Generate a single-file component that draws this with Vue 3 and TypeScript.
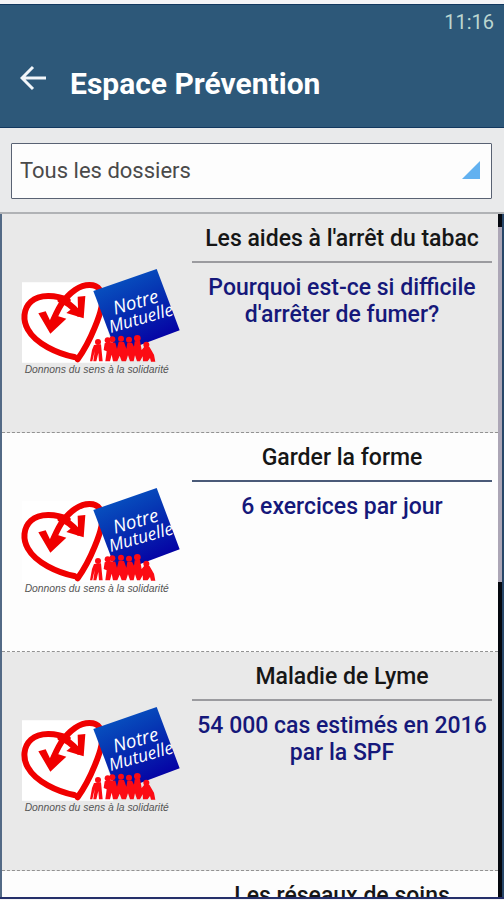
<script setup lang="ts">
import { ref } from 'vue'

interface Dossier {
  id: number
  category: string
  headline?: string
  logo: boolean
}

const dossiers: Dossier[] = [
  { id: 1, category: "Les aides à l'arrêt du tabac", headline: "Pourquoi est-ce si difficile d'arrêter de fumer?", logo: true },
  { id: 2, category: 'Garder la forme', headline: '6 exercices par jour', logo: true },
  { id: 3, category: 'Maladie de Lyme', headline: '54 000 cas estimés en 2016 par la SPF', logo: true },
  { id: 4, category: 'Les réseaux de soins', logo: false },
]

const filter = ref('all')
</script>

<template>
  <div class="screen">
    <header class="bar">
      <time class="clock">11:16</time>
      <div class="heading">
        <button class="back" type="button" aria-label="Retour">
          <svg viewBox="0 0 28 26" width="28" height="26">
            <path d="M13 2 L2 13 L13 24 M2 13 H26" />
          </svg>
        </button>
        <h1>Espace Prévention</h1>
      </div>
    </header>

    <div class="filter">
      <select v-model="filter" aria-label="Dossiers">
        <option value="all">Tous les dossiers</option>
      </select>
      <svg class="corner" viewBox="0 0 18 18" width="18" height="18" aria-hidden="true">
        <path d="M18 0 V18 H0 Z" />
      </svg>
    </div>

    <main class="body">
      <ul class="list">
        <li v-for="d in dossiers" :key="d.id" class="row">
          <div class="picture">
            <svg v-if="d.logo" class="logo" viewBox="60 45 480 336" role="img" aria-label="Notre Mutuelle">
              <defs>
                <linearGradient :id="`blue-${d.id}`" x1="0" y1="0" x2="0.5" y2="1">
                  <stop offset="0" stop-color="#0862c8" />
                  <stop offset="0.45" stop-color="#0639b4" />
                  <stop offset="1" stop-color="#0500a4" />
                </linearGradient>
              </defs>
              <path d="M66 97 H282 L340 300 V338 H66 Z" fill="#fff" />
              <g fill="none" stroke="#f00000" stroke-linecap="round" stroke-linejoin="round">
                <path d="M203 151 C168 134 118 132 93 155 C69 177 68 212 84 239 C107 281 173 311 223 321" stroke-width="18" />
                <path d="M153 226 C172 180 189 144 226 119 C254 101 286 100 299 119 C315 151 302 190 284 233 C269 270 253 300 233 328" stroke-width="18" />
                <path d="M182 150 C201 156 219 170 235 190" stroke-width="19" />
              </g>
              <path d="M115 190 L137 184 L151 213 L173 198 L199 206 L151 251 Z" fill="#f00000" />
              <path d="M233 140 L256 138 L251 205 L199 189 L217 175 L234 179 Z" fill="#f00000" />
              <path d="M280 123 L470 57 L539 241 L351 311 Z" :fill="`url(#blue-${d.id})`" />
              <g class="script" fill="#fff">
                <text x="345" y="194" font-size="56" transform="rotate(-16 345 194)">Notre</text>
                <text x="332" y="249" font-size="52" transform="rotate(-16 332 249)">Mutuelle</text>
              </g>
              <g fill="#fc0b13">
                <circle cx="294" cy="276" r="9" />
                <circle cx="323" cy="271" r="9" />
                <circle cx="337" cy="268" r="9" />
                <circle cx="363" cy="266" r="9" />
                <circle cx="387" cy="269" r="9" />
                <circle cx="412" cy="265" r="10" />
                <circle cx="439" cy="284" r="9" />
                <path d="M282 285 L303 283 L308 334 H297 L295 309 L289 334 H280 L284 304 L277 334 H270 L276 300 Z" />
                <path d="M314 280 L328 276 L346 278 L351 296 L356 275 L372 276 L379 296 L382 278 L396 278 L402 290 L404 274 L420 272 L425 300 L434 289 L448 290 L462 314 L466 335 H453 L450 324 L443 334 H429 L428 319 L420 334 H411 L405 316 L401 334 H390 L384 316 L378 334 H365 L359 317 L352 334 H339 L335 314 L330 334 H316 L320 304 L311 300 Z" />
              </g>
              <text class="motto" x="74" y="368" font-size="31">Donnons du sens à la solidarité</text>
            </svg>
          </div>
          <article class="text">
            <h2>{{ d.category }}</h2>
            <p v-if="d.headline">{{ d.headline }}</p>
          </article>
        </li>
      </ul>
      <div class="track" aria-hidden="true"><div class="thumb"></div></div>
    </main>
  </div>
</template>

<style>
body {
  margin: 0;
  background: #f4f4f6;
}
</style>

<style scoped>
.screen {
  display: flex;
  flex-direction: column;
  box-sizing: border-box;
  height: 100vh;
  padding: 4px 0 1px;
  overflow: hidden;
  font-family: Roboto, "Liberation Sans", sans-serif;
}

.bar {
  display: flex;
  flex: none;
  flex-direction: column;
  box-sizing: border-box;
  height: 124px;
  border: solid #12385f;
  border-width: 1px 0;
  background: #2d5879;
  color: #fff;
}

.clock {
  align-self: flex-end;
  margin: 4px 10px 0 0;
  font-size: 20px;
  line-height: 26px;
  color: #bcd6d0;
}

.heading {
  display: flex;
  align-items: center;
  gap: 22px;
  padding: 24px 20px 0;
}

.back {
  display: flex;
  margin: 0 0 12px;
  padding: 0;
  border: 0;
  background: none;
}

.back path {
  fill: none;
  stroke: #f2f6fa;
  stroke-width: 3;
}

h1 {
  margin: 0;
  font-size: 30px;
  font-weight: 700;
  line-height: 50px;
}

.filter {
  display: grid;
  flex: none;
  padding: 15px 12px 13px 11px;
  border-bottom: 2px solid #b0b2b5;
  background: #e9eaeb;
}

.filter select,
.corner {
  grid-area: 1 / 1;
}

.filter select {
  box-sizing: border-box;
  width: 100%;
  height: 56px;
  padding: 0 36px 2px 8px;
  border: 1px solid #596273;
  border-radius: 1px;
  background: #fdfdfd;
  appearance: none;
  font-family: inherit;
  font-size: 22px;
  color: #4a4a4a;
}

.corner {
  align-self: center;
  justify-self: end;
  margin: 0 12px 2px 0;
  pointer-events: none;
}

.corner path {
  fill: #62b1f0;
}

.body {
  display: flex;
  flex: 1;
  min-height: 0;
  border-bottom: 2px solid #25306a;
}

.list {
  flex: 1;
  margin: 0;
  padding: 0;
  overflow: hidden;
  border-left: 2px solid #536a86;
  list-style: none;
}

.row {
  display: flex;
  align-items: flex-start;
  gap: 12px;
  box-sizing: border-box;
  height: 219px;
  padding: 11px 6px 0 18px;
  border-bottom: 1px dashed #929292;
  background: #fdfdfd;
}

.row:nth-child(odd) {
  background: #e9e9e9;
}

.picture {
  flex: none;
  width: 160px;
  padding-top: 40px;
}

.logo {
  display: block;
  width: 100%;
}

.script {
  font-family: "Open Sans", sans-serif;
  font-style: italic;
  font-weight: 500;
}

.motto {
  font-family: "Liberation Sans", sans-serif;
  font-style: italic;
  fill: #555;
}

.text {
  flex: 1;
  text-align: center;
}

h2,
p {
  margin: 0;
  font-size: 23px;
  font-weight: 500;
  line-height: 27px;
}

h2 {
  padding-bottom: 9px;
  border-bottom: 2px solid #9b9b9f;
  color: #161616;
}

.row:nth-child(even) h2 {
  border-color: #4a5a78;
}

p {
  padding-top: 11px;
  color: #15187a;
}

.track {
  display: flex;
  flex: none;
  flex-direction: column;
  box-sizing: border-box;
  width: 6px;
  padding-top: 13px;
  border-right: 2px solid #274668;
  background: #05080f;
}

.thumb {
  height: 53%;
  background: #aca6b6;
}
</style>
